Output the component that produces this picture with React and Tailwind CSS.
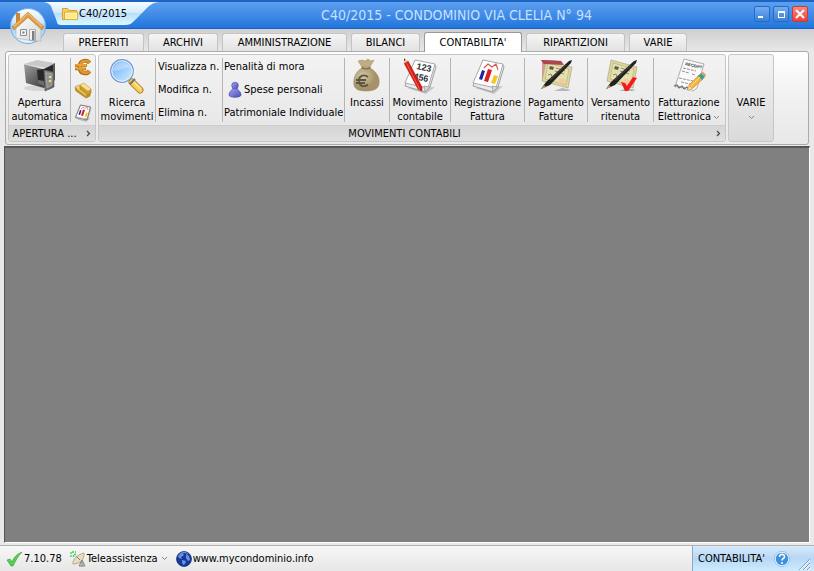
const tabs = [
  { label: 'PREFERITI', width: 'w-[81px]' },
  { label: 'ARCHIVI', width: 'w-[70px]' },
  { label: 'AMMINISTRAZIONE', width: 'w-[125px]' },
  { label: 'BILANCI', width: 'w-[69px]' },
  { label: "CONTABILITA'", width: 'w-[98px]', active: true },
  { label: 'RIPARTIZIONI', width: 'w-[99px]' },
  { label: 'VARIE', width: 'w-[58px]' },
]

const actions = [
  { lines: ['Incassi'], icon: MoneyBagIcon, width: 'w-11' },
  { lines: ['Movimento', 'contabile'], icon: LedgerIcon, width: 'w-[60px]' },
  { lines: ['Registrazione', 'Fattura'], icon: ChartIcon, width: 'w-[73px]' },
  { lines: ['Pagamento', 'Fatture'], icon: PaymentIcon, width: 'w-[62px]' },
  { lines: ['Versamento', 'ritenuta'], icon: DepositIcon, width: 'w-[65px]' },
  { lines: ['Fatturazione', 'Elettronica'], icon: ReceiptIcon, width: 'w-[70px]', menu: true },
]

function HomeIcon() {
  return (
    <svg viewBox="0 0 36 36" className="h-9 w-9">
      <defs>
        <linearGradient id="orb" x1="0" y1="0" x2="0" y2="1">
          <stop offset="0" stopColor="#ffffff" />
          <stop offset=".4" stopColor="#d3e6f8" />
          <stop offset=".5" stopColor="#9fcbf2" />
          <stop offset="1" stopColor="#e2f8ff" />
        </linearGradient>
        <linearGradient id="wall" x1="0" y1="0" x2="1" y2="1">
          <stop offset="0" stopColor="#ffffff" />
          <stop offset="1" stopColor="#d6d6d6" />
        </linearGradient>
      </defs>
      <circle cx="18" cy="18" r="17.500" fill="url(#orb)" stroke="#6eaae4" />
      <path d="M6 17 18 7l13 10v16H24L6 30z" fill="url(#wall)" stroke="#a5a5a5" strokeWidth=".5" />
      <path d="M6 5h4v7l-4 4z" fill="#c98734" />
      <path d="m2 19 16-15 16 15-2 3L18 9.500 4 22z" fill="#dd9a3f" stroke="#b87a2c" strokeWidth=".5" />
      <path d="m4 18.500 14-13 14 13" fill="none" stroke="#f0bd6c" strokeWidth="1.200" />
      <path d="M10.500 21.500h6v6h-6z" fill="#f5f5f5" stroke="#8d8d8d" />
      <path d="M12.500 23.500h2v2h-2z" fill="#777" />
      <path d="M19.500 21.500h6V33l-6-1z" fill="#f2f2f2" stroke="#9a9a9a" strokeWidth=".8" />
      <path d="M22 23h2.500v9.500L22 32z" fill="#7e7e7e" />
    </svg>
  )
}

function FolderIcon() {
  return (
    <svg viewBox="0 0 16 14" className="h-3.5 w-4">
      <path d="M.5 12.500v-11h5l1.500 2h7.500v9z" fill="#f7cf62" stroke="#d9a02b" />
      <path d="M2.500 12.500V5h13v7.500z" fill="#fff0a5" stroke="#dfac35" />
      <path d="M4 7h10v4H4z" fill="#ffe98d" />
    </svg>
  )
}

function SafeIcon() {
  return (
    <svg viewBox="0 0 36 36" className="h-9 w-9">
      <defs>
        <linearGradient id="steel" x1="0" y1="0" x2=".7" y2="1">
          <stop offset="0" stopColor="#a0a0a0" />
          <stop offset="1" stopColor="#474747" />
        </linearGradient>
        <linearGradient id="door" x1="0" y1="0" x2="1" y2="1">
          <stop offset="0" stopColor="#8d8d8d" />
          <stop offset="1" stopColor="#5d5d5d" />
        </linearGradient>
      </defs>
      <ellipse cx="16" cy="30" rx="14" ry="3" fill="#bbb" opacity=".5" />
      <path d="m2 6 13-4 18 3-9 5z" fill="#c9c9c9" />
      <path d="m2 6 20 5v19L4 25z" fill="url(#steel)" />
      <path d="m2 6 20 5 11-6" fill="none" stroke="#dcdcdc" strokeWidth=".7" />
      <path d="m22 11 11-6v17l-11 8z" fill="#5a5a5a" />
      <path d="m15 12 7-1 9-4v15l-9 5-6-4z" fill="#282828" />
      <path d="m16 22 6 1v5l-6-3z" fill="#6d6d6d" />
      <path d="m22 12 10 2v15l-9 4z" fill="url(#door)" stroke="#4a4a4a" strokeWidth=".6" />
      <path d="m24 15 6 1v11l-5 3z" fill="#8c8c8c" stroke="#bbb" strokeWidth=".6" />
      <circle cx="28" cy="19" r="1.300" fill="#f5d896" />
      <circle cx="28" cy="23" r="1.300" fill="#f2cf7a" />
    </svg>
  )
}

function EuroIcon() {
  return (
    <svg viewBox="0 0 18 18" className="h-[18px] w-[18px]">
      <path d="M15.500 5C13 1.500 6 1.500 5.500 9c.5 7.500 7.500 7.500 10 4" fill="none" stroke="#a9650f" strokeWidth="4" />
      <path d="M1 7.500h12M1 11h11" stroke="#a9650f" strokeWidth="2.500" />
      <path d="M15.500 4.500C12 1.500 6.500 2.500 6 9c.5 6.500 6 7 9.500 4.500" fill="none" stroke="#e0962a" strokeWidth="2.800" />
      <path d="M1.500 7h11m-11 3.500h10" stroke="#e8a437" strokeWidth="1.800" />
    </svg>
  )
}

function GoldIcon() {
  return (
    <svg viewBox="0 0 18 18" className="h-[18px] w-[18px]">
      <path d="m1 6 4-2 11 8v3l-4 2L2 10z" fill="#c6922a" stroke="#94700f" strokeWidth=".6" />
      <path d="m1 6 4-2 10 8-3 2z" fill="#f0d27a" />
      <path d="m6 4 4-2 7 6v4l-3 2-8-6z" fill="#cf9d2c" stroke="#98720f" strokeWidth=".6" />
      <path d="m6 4 4-2 7 6-3 2z" fill="#f5de93" />
      <path d="m3 8 9 7" fill="none" stroke="#e2b64a" />
    </svg>
  )
}

function ChartDrawing() {
  return (
    <g>
      <path d="M5 30 24 36l9-8-16 2z" fill="#c6c6c6" />
      <path d="m13 3 20 4 1 2-6 20-5 5L3 28z" fill="#ececec" stroke="#8b8b8b" strokeWidth=".8" />
      <path d="m13 2 20 4-7 24-23-5z" fill="#fff" stroke="#949494" strokeWidth=".8" />
      <path d="m23 34 5-5-6-1z" fill="#d4d4d4" stroke="#888" strokeWidth=".6" />
      <path d="m14 10 4-4 4 3 4-3 2 6" fill="none" stroke="#d8564b" strokeWidth="1.200" />
      <path d="m12 12 3 1-3 9-3-1z" fill="#20249a" />
      <path d="m18 11 4 1-4 12-4-1z" fill="#dd1b22" />
      <path d="m24 17 4 1-3 8-4-1z" fill="#f5c721" />
    </g>
  )
}

function ChartIcon() {
  return (
    <svg viewBox="0 0 36 36" className="h-9 w-9">
      <ChartDrawing />
    </svg>
  )
}

function SmallChartIcon() {
  return (
    <svg viewBox="0 0 36 36" className="h-[18px] w-[18px]">
      <ChartDrawing />
      <path d="m13 2 20 4-7 26-23-5z" fill="none" stroke="#777" strokeWidth="1.800" />
    </svg>
  )
}

function SearchIcon() {
  return (
    <svg viewBox="0 0 36 36" className="h-9 w-9">
      <defs>
        <linearGradient id="glass" x1="0" y1="0" x2="1" y2="1">
          <stop offset="0" stopColor="#5ea9f8" />
          <stop offset=".5" stopColor="#9ccdfc" />
          <stop offset="1" stopColor="#d8f0ff" />
        </linearGradient>
      </defs>
      <path d="m20 20 5 5" stroke="#929eaa" strokeWidth="3.500" />
      <path d="m23 24 8 8" stroke="#b98a2c" strokeWidth="7" strokeLinecap="round" />
      <path d="m23 24 8 8" stroke="#f6cf57" strokeWidth="5" strokeLinecap="round" />
      <path d="m24 23 8 8" stroke="#fdeaa4" strokeWidth="1.500" />
      <path d="m21 26 5-5" stroke="#6b6f77" strokeWidth="1.800" />
      <circle cx="13" cy="13" r="11.300" fill="url(#glass)" stroke="#7d9acb" strokeWidth="1.200" />
      <circle cx="13" cy="13" r="10.200" fill="none" stroke="#e3f2ff" />
      <path d="M4 13C4 4 17 0 22 10c-6-2-10 3-18 3z" fill="#fff" opacity=".3" />
    </svg>
  )
}

function PersonIcon() {
  return (
    <svg viewBox="0 0 14 18" className="h-[18px] w-3.5">
      <defs>
        <linearGradient id="pawn" x1="0" y1="0" x2="1" y2="1">
          <stop offset="0" stopColor="#a3a5f0" />
          <stop offset="1" stopColor="#4a4db8" />
        </linearGradient>
      </defs>
      <path d="M1 14c0-4 3-4 4-7h4c1 3 4 3 4 7 0 3-12 3-12 0z" fill="url(#pawn)" stroke="#484ba8" strokeWidth=".7" />
      <circle cx="7" cy="4.500" r="3.300" fill="url(#pawn)" stroke="#5356b4" strokeWidth=".7" />
    </svg>
  )
}

function MoneyBagIcon() {
  return (
    <svg viewBox="0 0 36 36" className="h-9 w-9">
      <defs>
        <radialGradient id="sack" cx=".35" cy=".35">
          <stop offset="0" stopColor="#d3c8a5" />
          <stop offset="1" stopColor="#a69268" />
        </radialGradient>
      </defs>
      <path d="M13 9 9 3l4-1 3 1 3-2 3 2 3-1-4 7z" fill="#bfae84" stroke="#9c8a60" strokeWidth=".5" />
      <path d="M13 10C6 14 4 21 5 27c1 5 6 6 12 6s12-1 13-7c1-6-2-12-9-16z" fill="url(#sack)" stroke="#97845a" strokeWidth=".5" />
      <path d="M12.500 9.500c3 1.500 6 1.500 9 0" fill="none" stroke="#8a7147" strokeWidth="1.600" />
      <path d="M19 19c-5-4-10 0-9 5 1 5 6 5 9 2.500M7 22h10M7 25h9" fill="none" stroke="#5a5644" strokeWidth="1.800" />
    </svg>
  )
}

function LedgerIcon() {
  return (
    <svg viewBox="0 0 36 36" className="h-9 w-9">
      <path d="M5 30 24 36l9-7-16 1z" fill="#c6c6c6" />
      <path d="m13 3 20 4 1 2-6 20-5 5L3 28z" fill="#ececec" stroke="#8b8b8b" strokeWidth=".8" />
      <path d="m13 2 20 4-7 24-23-5z" fill="#fff" stroke="#949494" strokeWidth=".8" />
      <path d="m23 34 5-5-6-1z" fill="#d4d4d4" stroke="#888" strokeWidth=".6" />
      <g fill="#333" fontFamily="Liberation Sans, sans-serif" fontSize="9" fontWeight="bold">
        <text x="14" y="11" transform="rotate(12 14 11)">123</text>
        <text x="11" y="21" transform="rotate(12 11 21)">456</text>
      </g>
      <path d="m2 5 4-2 14 26v4l-4-2z" fill="#d71c16" stroke="#a01410" strokeWidth=".5" />
      <path d="m4.500 5 13 26" stroke="#f4604c" />
      <path d="m2 1 4 2-4 2.500z" fill="#e8c794" />
      <path d="m2 0 1.500 2L2 3z" fill="#333" />
    </svg>
  )
}

function ChequeDrawing() {
  return (
    <g>
      <path d="m16 33 8-3 9 2-4 1z" fill="#b5b5b5" />
      <path d="m8 2 26 7-4 21-26-7z" fill="#ddd79f" stroke="#a39e6e" strokeWidth=".6" />
      <path d="m10 5 21 6-3 16-21-6z" fill="#e5e0b0" stroke="#b8b180" strokeWidth=".7" />
      <path d="m12 8 4 1-1 3-4-1z" fill="#5d604c" />
      <path d="m18 10 9 3m-10 0 9 3M10 17l3-1 1 3 3-1" stroke="#8f8963" fill="none" />
      <path d="m21 20 7 2-1 4-7-1z" fill="#efcda0" />
      <path d="M3 31 8 24 31 3l3-1-1 3-21 22z" fill="#222" />
      <path d="m12 22 16-15" stroke="#666" strokeWidth=".6" />
      <path d="m3 31 3-4 2 2z" fill="#b79a4c" />
    </g>
  )
}

function PaymentIcon() {
  return (
    <svg viewBox="0 0 36 36" className="h-9 w-9">
      <path d="m4 3 19 0 3 3-1 2-21 13z" fill="#d99a98" />
      <path d="m3 2 20 1 2 4-19-1z" fill="#a23a42" />
      <ChequeDrawing />
      <path d="m3 2 20 1 2 4-19-1z" fill="#ad454c" />
    </svg>
  )
}

function DepositIcon() {
  return (
    <svg viewBox="0 0 36 36" className="h-9 w-9">
      <ChequeDrawing />
      <path d="m18 24 4 1 2 3 6-9 4 1-9 13h-3z" fill="#f7191a" />
    </svg>
  )
}

function ReceiptIcon() {
  return (
    <svg viewBox="0 0 36 36" className="h-9 w-9">
      <path d="m13 1 20 5-7 24-4 3-3-2-3 1-3-3-3 1-2-2-4 1z" fill="#fafafa" stroke="#9b9b9b" strokeWidth=".8" />
      <path d="m3 28 3-1 2 3 3-2 2 3 3-2 2 3 3-2" fill="none" stroke="#6f6f6f" strokeWidth="1.200" />
      <text x="14" y="7" fill="#333" fontFamily="Liberation Sans, sans-serif" fontSize="4" fontWeight="bold" transform="rotate(13 14 7)">RECEIPT</text>
      <path d="m12 10 13 3m-14 0 7 2m3 1 3 1M8 20l14 3m-12 1 9 2" stroke="#777" strokeDasharray="3 1" strokeWidth=".8" />
      <path d="m28 17 4 4-11 10-4 1 1-5z" fill="#f4b544" stroke="#c28429" strokeWidth=".6" />
      <path d="m27 18 3-3 4 4-3 3z" fill="#3e9e97" />
      <path d="m30 15 2-1 3 3-1 2z" fill="#e39843" />
      <path d="m18 28 3 3-4 1z" fill="#f7df9c" />
      <path d="m20 28 9-9" stroke="#ffdc7c" />
    </svg>
  )
}

function CheckIcon() {
  return (
    <svg viewBox="0 0 16 16" className="h-4 w-4">
      <path d="m1 9 3-1 2 3c2-5 5-8 10-10-4 4-6 8-9 14H5z" fill="#57d04f" stroke="#2c9d36" strokeWidth=".6" />
    </svg>
  )
}

function DishIcon() {
  return (
    <svg viewBox="0 0 16 16" className="h-4 w-4">
      <path d="M1 6V1h5M3.500 6V3.500H6" fill="none" stroke="#3ad04a" strokeDasharray="2 1" strokeWidth="1.300" />
      <path d="M14 2c1 6-4 11-11 11C2 9 8 3 14 2z" fill="#e6dcc0" stroke="#a39a7f" strokeWidth=".8" />
      <path d="m6 5 4 4m-1 6 3-6 3 6z" fill="none" stroke="#817b6c" strokeWidth=".9" />
      <path d="M11 11h2v4h-2z" fill="#c1c1c1" stroke="#777" strokeWidth=".5" />
    </svg>
  )
}

function GlobeIcon() {
  return (
    <svg viewBox="0 0 16 16" className="h-4 w-4">
      <circle cx="8" cy="8" r="7.500" fill="#17399b" stroke="#152869" strokeWidth=".7" />
      <path d="m2 5 3-3 3 1-1 2-2 1 1 2-3-1zM10 3l3 2 1 4-2 1-2-3zM6 9l4 1-1 3-2 1-1-3z" fill="#6893df" />
      <path d="M4 3c2-2 6-2 8 0" fill="none" stroke="#91b6f1" strokeWidth=".8" />
    </svg>
  )
}

function HelpIcon() {
  return (
    <svg viewBox="0 0 16 16" className="h-4 w-4">
      <circle cx="8" cy="8" r="7" fill="#3a90e2" stroke="#e8f4ff" strokeWidth="1.500" />
      <circle cx="8" cy="8" r="7.600" fill="none" stroke="#7aa2cd" strokeWidth=".6" />
      <path d="M5.500 6c0-4 5.500-3 5 0-.3 1.500-2.500 1.500-2.500 3.500M8 11v2" fill="none" stroke="#fff" strokeWidth="1.600" />
    </svg>
  )
}

function DownArrow() {
  return (
    <svg viewBox="0 0 7 5" className="h-[5px] w-[7px] shrink-0">
      <path d="m1 1 2.500 2.500L6 1" fill="none" stroke="#888" />
    </svg>
  )
}

function RightArrow() {
  return (
    <svg viewBox="0 0 5 7" className="h-[7px] w-[5px]">
      <path d="m1 1 2.500 2.500L1 6" fill="none" stroke="#444" strokeWidth="1.200" />
    </svg>
  )
}

function Separator() {
  return <div className="my-[3px] w-px shrink-0 bg-[#b5b5b5]" />
}

function BigButton({ icon: Icon, lines, width, menu }) {
  return (
    <button className={`flex shrink-0 flex-col items-center pt-[3px] whitespace-nowrap ${width}`}>
      <Icon />
      <span className="mt-0.5">{lines[0]}</span>
      {lines[1] && (
        <span className="flex items-center gap-0.5">
          {lines[1]}
          {menu && <DownArrow />}
        </span>
      )}
    </button>
  )
}

function Group({ title, children, className }) {
  return (
    <section className={`flex flex-col overflow-hidden rounded-[3px] border border-[#c6c6c6] bg-linear-to-b from-[#f3f3f3] to-[#e5e5e5] ${className}`}>
      <div className="flex h-[70px]">{children}</div>
      <div className="flex h-4 items-center border-t border-[#cecece] bg-linear-to-b from-[#d5d5d5] to-[#dfdfdf] pr-1">
        <h2 className="flex-1 pr-1.5 text-center whitespace-nowrap">{title}</h2>
        <button aria-label={`Opzioni ${title}`}>
          <RightArrow />
        </button>
      </div>
    </section>
  )
}

function TitleBar() {
  return (
    <header className="relative flex h-[29px] shrink-0 items-start border-t-2 border-b border-t-[#1c63c2] border-b-[#1761c5] bg-linear-to-b from-[#5c9ff0] to-[#2076dc]">
      <div className="relative ml-11 flex h-[23px] w-[115px] shrink-0 items-center">
        <svg viewBox="0 0 115 23" preserveAspectRatio="none" className="absolute inset-0 h-full w-full">
          <defs>
            <linearGradient id="doc" x1="0" y1="0" x2="0" y2="1">
              <stop offset="0" stopColor="#f4fbff" />
              <stop offset=".45" stopColor="#d4ecfd" />
              <stop offset=".5" stopColor="#b8def9" />
              <stop offset="1" stopColor="#dcfaff" />
            </linearGradient>
          </defs>
          <path d="M0 0h115c-8 1-10 4-14 8L90 19c-3 3-5 4-9 4H17c-4 0-4-3-5-6L8 7C7 3 5 1 0 0z" fill="url(#doc)" />
        </svg>
        <div className="relative ml-[18px] flex items-center gap-px">
          <FolderIcon />
          <span>C40/2015</span>
        </div>
      </div>
      <h1 className="flex-1 pt-1 text-center text-[14px] leading-[18px] font-extralight text-[#c5e0ff]">
        C40/2015 - CONDOMINIO VIA CLELIA N° 94
      </h1>
      <div className="mt-1 mr-1.5 flex gap-[3px]">
        <button aria-label="Riduci a icona" className="flex h-4 w-4 items-end rounded-xs border border-[#246bc6] bg-linear-to-b from-[#74acf1] to-[#397fd9] p-[3px]">
          <span className="h-0.5 w-[5px] bg-white" />
        </button>
        <button aria-label="Ingrandisci" className="flex h-4 w-4 items-center justify-center rounded-xs border border-[#246bc6] bg-linear-to-b from-[#74acf1] to-[#397fd9]">
          <span className="h-[7px] w-[7px] border border-t-2 border-white" />
        </button>
        <button aria-label="Chiudi" className="flex h-4 w-4 items-center justify-center rounded-xs border border-[#c93a42] bg-linear-to-b from-[#f48880] to-[#ef3c35]">
          <svg viewBox="0 0 10 10" className="h-2.5 w-2.5">
            <path d="m1 1 8 8M9 1 1 9" stroke="#fff" strokeWidth="2" />
          </svg>
        </button>
      </div>
      <button aria-label="Menu principale" className="absolute top-1.5 left-2.5">
        <HomeIcon />
      </button>
    </header>
  )
}

function Tabs() {
  return (
    <nav className="flex h-[22px] shrink-0 items-end gap-1 bg-linear-to-b from-[#cfcfcf] to-[#e8e8e8] pl-[63px]">
      {tabs.map(tab => (
        <button
          key={tab.label}
          className={`shrink-0 rounded-t-[3px] border border-b-0 text-center ${tab.width} ${
            tab.active ? 'z-10 -mb-px h-5 border-[#999] bg-white' : 'h-[18px] border-[#c4c4c4] bg-linear-to-b from-[#f5f5f5] to-[#e2e2e2]'
          }`}
        >
          {tab.label}
        </button>
      ))}
    </nav>
  )
}

function Ribbon() {
  return (
    <div className="mx-[5px] flex shrink-0 gap-0.5 rounded-[3px] border border-[#aaa] bg-linear-to-b from-white via-[#f1f1f1] to-[#e8e8e8] p-0.5">
      <Group title="APERTURA ..." className="w-[88px] shrink-0">
        <BigButton icon={SafeIcon} lines={['Apertura', 'automatica']} width="w-[61px]" />
        <Separator />
        <div className="flex flex-1 flex-col items-center justify-between py-[3px]">
          <button aria-label="Euro"><EuroIcon /></button>
          <button aria-label="Lingotti"><GoldIcon /></button>
          <button aria-label="Grafico"><SmallChartIcon /></button>
        </div>
      </Group>
      <Group title="MOVIMENTI CONTABILI" className="w-[628px] shrink-0">
        <BigButton icon={SearchIcon} lines={['Ricerca', 'movimenti']} width="w-14" />
        <Separator />
        <div className="flex w-[66px] flex-col items-start justify-between py-[5px] pl-0.5 whitespace-nowrap">
          <button>Visualizza n.</button>
          <button>Modifica n.</button>
          <button>Elimina n.</button>
        </div>
        <Separator />
        <div className="flex w-[121px] flex-col items-start justify-between py-[5px] pl-px whitespace-nowrap">
          <button>Penalità di mora</button>
          <button className="flex h-3.5 items-center gap-0.5 pl-1">
            <PersonIcon />
            Spese personali
          </button>
          <button>Patrimoniale Individuale</button>
        </div>
        {actions.map(action => (
          <div key={action.lines[0]} className="flex">
            <Separator />
            <BigButton {...action} />
          </div>
        ))}
      </Group>
      <section className="w-[46px] shrink-0 rounded-[3px] border border-[#c6c6c6] bg-linear-to-b from-[#f3f3f3] to-[#dadada]">
        <button className="flex h-full w-full flex-col items-center pt-[41px]">
          VARIE
          <span className="flex h-3.5 items-center">
            <DownArrow />
          </span>
        </button>
      </section>
    </div>
  )
}

function StatusBar() {
  return (
    <footer className="flex h-[26px] shrink-0 items-center border-t border-[#b2b2b2] bg-linear-to-b from-[#f7f7f7] to-[#e7e7e7] pl-1.5">
      <div className="flex items-center gap-0.5">
        <CheckIcon />
        7.10.78
      </div>
      <button className="ml-2 flex items-center gap-px">
        <DishIcon />
        Teleassistenza
        <span className="ml-0.5"><DownArrow /></span>
      </button>
      <a href="#" className="ml-2 flex items-center gap-px">
        <GlobeIcon />
        www.mycondominio.info
      </a>
      <div className="ml-auto flex h-full w-[122px] items-center border-l border-[#87a9ce] bg-linear-to-b from-[#d6eafa] via-[#b7d7f5] to-[#cdebff] pl-[5px]">
        <span className="w-[76px]">CONTABILITA'</span>
        <button aria-label="Aiuto"><HelpIcon /></button>
        <svg viewBox="0 0 12 12" className="mt-2.5 ml-auto mr-1 h-3 w-3">
          <path d="M1 12 12 1M5 12l7-7M9 12l3-3" stroke="#829bb5" />
          <path d="M2 12 12 2M6 12l6-6M10 12l2-2" stroke="#fff" />
        </svg>
      </div>
    </footer>
  )
}

export default function App() {
  return (
    <div className="flex min-h-screen flex-col bg-[#e9e9e9] font-['DejaVu_Sans_Condensed','Noto_Sans',sans-serif] text-[11px] leading-[14px] text-black">
      <TitleBar />
      <Tabs />
      <Ribbon />
      <main className="mx-1 mt-px mb-0.5 flex-1 border border-t-2 border-t-[#555] border-r-white border-b-white border-l-[#555] bg-[#808080]" />
      <StatusBar />
    </div>
  )
}
